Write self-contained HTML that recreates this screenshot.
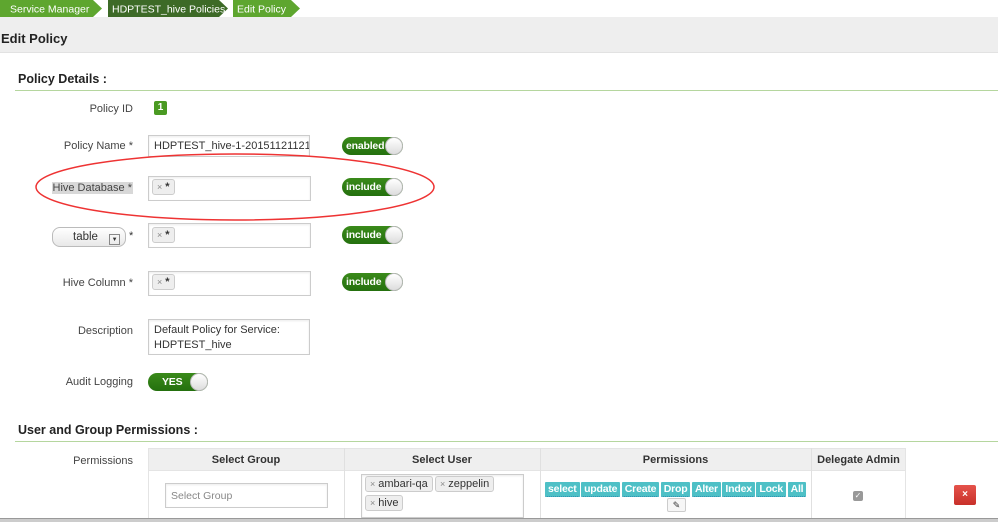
<!DOCTYPE html>
<html><head><meta charset="utf-8"><style>
*{box-sizing:border-box;margin:0;padding:0}
body{width:998px;height:522px;overflow:hidden;background:#fff;font-family:"Liberation Sans",sans-serif;font-size:11px;color:#333;position:relative}
.a{position:absolute}
.lbl{position:absolute;right:865px;text-align:right;font-size:11px;color:#444;white-space:nowrap}
.inp{position:absolute;border:1px solid #ccc;background:#fff;box-shadow:inset 0 1px 2px rgba(0,0,0,.08)}
.tag{position:absolute;border:1px solid #ccc;background:#eee;border-radius:3px;font-size:11px;padding:1px 4px;color:#333;white-space:nowrap}
.tag .x{color:#888;font-size:9px;margin-right:3px}
.tog{position:absolute;height:18px;width:61px;border-radius:9px;background:linear-gradient(#3a8a1a,#24700e);color:#fff;font-weight:bold;font-size:10.5px;line-height:18px;padding-left:4px;letter-spacing:-0.2px}
.tog .k{position:absolute;right:0;top:0;width:18px;height:18px;border-radius:50%;background:linear-gradient(#fff,#ddd);border:1px solid #bbb}
.h{font-weight:bold;font-size:12.5px;color:#222}
.pt{display:inline-block;background:#4ec0c6;color:#fff;font-weight:bold;font-size:10.5px;padding:1px 3px;margin-right:1.5px;border-bottom:1px dotted #2a8fb0;border-radius:1px;letter-spacing:-0.2px}
.th{position:absolute;top:454px;text-align:center;font-weight:bold;font-size:11px}
</style></head><body>
<svg class="a" style="left:0;top:0" width="310" height="17">
<polygon points="0,0 93,0 102,8.5 93,17 0,17" fill="#5ea62f"/>
<polygon points="108,0 219,0 228,8.5 219,17 108,17 108,17" fill="#3d6a27"/>
<polygon points="233,0 291,0 300,8.5 291,17 233,17" fill="#5ea62f"/>
<text x="10" y="12.5" fill="#fff" font-family="Liberation Sans,sans-serif" font-size="10.5">Service Manager</text>
<text x="112" y="12.5" fill="#fff" font-family="Liberation Sans,sans-serif" font-size="10.5">HDPTEST_hive Policies</text>
<text x="237" y="12.5" fill="#fff" font-family="Liberation Sans,sans-serif" font-size="10.5">Edit Policy</text>
</svg>
<div class="a" style="left:0;top:17px;width:998px;height:36px;background:#eee;border-bottom:1px solid #e2e2e2"></div>
<div class="a h" style="left:1px;top:31px;font-size:13px">Edit Policy</div>
<div class="a h" style="left:18px;top:72px">Policy Details :</div>
<div class="a" style="left:15px;top:90px;width:983px;height:1px;background:#b5d69e"></div>

<div class="lbl" style="top:103px">Policy ID</div>
<div class="a" style="left:154px;top:101px;width:13px;height:14px;background:#4a9a22;color:#fff;font-weight:bold;font-size:10px;text-align:center;line-height:14px;border-radius:2px">1</div>

<div class="lbl" style="top:140px">Policy Name *</div>
<div class="inp" style="left:148px;top:135px;width:162px;height:22px;font-size:11px;padding:4px 5px;white-space:nowrap;overflow:hidden">HDPTEST_hive-1-20151121121415</div>
<div class="tog" style="left:342px;top:137px">enabled<div class="k"></div></div>

<div class="lbl" style="top:182px;background:#d8d8d8;padding:0 1px">Hive Database *</div>
<div class="inp" style="left:148px;top:176px;width:163px;height:25px"></div>
<div class="tag" style="left:152px;top:179px"><span class="x">×</span><b>*</b></div>
<div class="tog" style="left:342px;top:178px">include<div class="k"></div></div>

<div class="a" style="left:52px;top:227px;width:74px;height:20px;border:1px solid #bbb;border-radius:8px;background:linear-gradient(#fff,#e8e8e8);font-size:11.5px;padding:3px 0 0 20px">table <span style="display:inline-block;width:11px;height:11px;border:1px solid #888;margin-left:8px;vertical-align:-1px;font-size:6px;text-align:center;line-height:10px">▼</span></div>
<div class="a" style="left:129px;top:230px">*</div>
<div class="inp" style="left:148px;top:223px;width:163px;height:25px"></div>
<div class="tag" style="left:152px;top:227px"><span class="x">×</span><b>*</b></div>
<div class="tog" style="left:342px;top:226px">include<div class="k"></div></div>

<div class="lbl" style="top:277px">Hive Column *</div>
<div class="inp" style="left:148px;top:271px;width:163px;height:25px"></div>
<div class="tag" style="left:152px;top:274px"><span class="x">×</span><b>*</b></div>
<div class="tog" style="left:342px;top:273px">include<div class="k"></div></div>

<div class="lbl" style="top:325px">Description</div>
<div class="inp" style="left:148px;top:319px;width:162px;height:36px;font-size:11px;padding:3px 5px;line-height:15px">Default Policy for Service: HDPTEST_hive</div>
<div class="lbl" style="top:376px">Audit Logging</div>
<div class="tog" style="left:148px;top:373px;width:60px;padding-left:14px">YES<div class="k"></div></div>

<svg class="a" style="left:0;top:0" width="450" height="230"><ellipse cx="235" cy="187" rx="199" ry="33" fill="none" stroke="#e33" stroke-width="1.5"/></svg>

<div class="a h" style="left:18px;top:423px">User and Group Permissions :</div>
<div class="a" style="left:15px;top:441px;width:983px;height:1px;background:#b5d69e"></div>
<div class="lbl" style="top:455px">Permissions</div>
<div class="a" style="left:148px;top:448px;width:758px;height:74px;border:1px solid #e4e4e4"></div>
<div class="a" style="left:148px;top:448px;width:758px;height:23px;background:#efefef;border:1px solid #e4e4e4"></div>
<div class="a" style="left:344px;top:448px;width:1px;height:74px;background:#e0e0e0"></div>
<div class="a" style="left:540px;top:448px;width:1px;height:74px;background:#e0e0e0"></div>
<div class="a" style="left:811px;top:448px;width:1px;height:74px;background:#e0e0e0"></div>
<div class="th" style="left:148px;width:196px">Select Group</div>
<div class="th" style="left:344px;width:196px">Select User</div>
<div class="th" style="left:540px;width:271px">Permissions</div>
<div class="th" style="left:811px;width:95px">Delegate Admin</div>
<div class="inp" style="left:165px;top:483px;width:163px;height:25px;font-size:10.5px;color:#888;padding:6px 5px">Select Group</div>
<div class="inp" style="left:361px;top:474px;width:163px;height:44px"></div>
<div class="tag" style="left:365px;top:476px"><span class="x">×</span>ambari-qa</div>
<div class="tag" style="left:435px;top:476px"><span class="x">×</span>zeppelin</div>
<div class="tag" style="left:365px;top:495px"><span class="x">×</span>hive</div>
<div class="a" style="left:545px;top:482px;white-space:nowrap"><span class="pt">select</span><span class="pt">update</span><span class="pt">Create</span><span class="pt">Drop</span><span class="pt">Alter</span><span class="pt">Index</span><span class="pt">Lock</span><span class="pt">All</span></div>
<div class="a" style="left:667px;top:498px;width:19px;height:14px;border:1px solid #ccc;background:#f6f6f6;border-radius:2px;font-size:9px;text-align:center;line-height:12px">✎</div>
<div class="a" style="left:853px;top:491px;width:10px;height:10px;background:#999;border-radius:2px;color:#fff;font-size:8px;text-align:center;line-height:10px">✓</div>
<div class="a" style="left:954px;top:485px;width:22px;height:20px;background:linear-gradient(#e5534b,#c8302a);border-radius:2px;color:#fff;font-weight:bold;font-size:10px;text-align:center;line-height:20px">×</div>
<div class="a" style="left:0;top:518px;width:998px;height:4px;background:#ccc;border-top:1px solid #999"></div>
</body></html>
